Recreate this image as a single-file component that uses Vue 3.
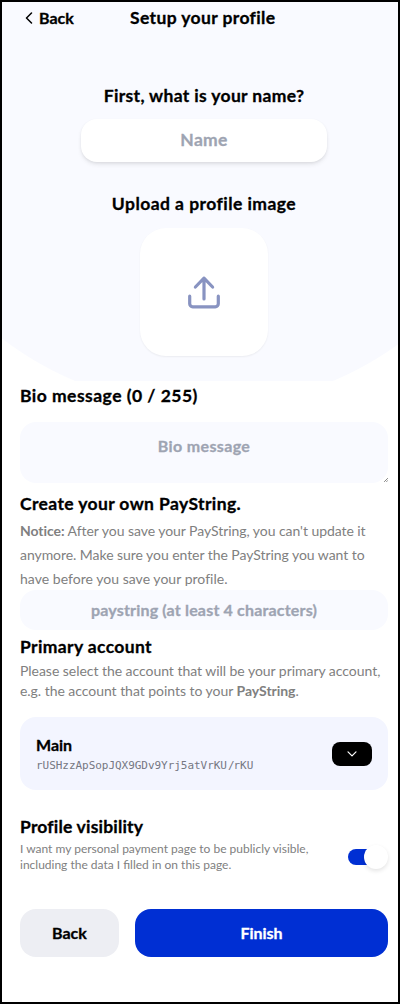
<script setup>
import { ref } from 'vue'

const name = ref('')
const bio = ref('')
const payString = ref('')
</script>

<template>
  <main class="screen">
    <section class="hero">
      <header class="bar">
        <button class="back" type="button">
          <svg width="8" height="12" viewBox="0 0 8 12"><path d="M6.5 1 1.5 6l5 5" /></svg>
          <span>Back</span>
        </button>
        <h1 class="t-title">Setup your profile</h1>
      </header>
      <h2 class="ask">First, what is your name?</h2>
      <input v-model="name" class="name" placeholder="Name">
      <h2 class="upload-title">Upload a profile image</h2>
      <div class="drop">
        <svg width="34" height="34" viewBox="0 0 34 34">
          <path d="M17 24V3.2M8.4 12 17 3.2 25.6 12" />
          <path d="M2.7 21.2v7.6a3 3 0 0 0 3 3h22.6a3 3 0 0 0 3-3v-7.6" />
        </svg>
      </div>
    </section>

    <section class="body">
      <h2 class="t-bio">Bio message ({{ bio.length }} / 255)</h2>
      <div class="bio-wrap">
        <textarea v-model="bio" class="bio" placeholder="Bio message"></textarea>
        <svg class="grip" width="4" height="4" viewBox="0 0 4 4"><path d="M.4 3.6 3.6.4M2.6 3.6l1-1" /></svg>
      </div>
      <h2 class="t-create">Create your own PayString.</h2>
      <p class="notice">
        <span class="n1"><b>Notice:</b> After you save your PayString, you can't update it</span><br>
        <span class="n1">anymore. Make sure you enter the PayString you want to</span><br>
        <span class="n3">have before you save your profile.</span>
      </p>
      <input v-model="payString" class="paystring" placeholder="paystring (at least 4 characters)">
      <h2 class="t-primary">Primary account</h2>
      <p class="hint">
        Please select the account that will be your primary account,<br>
        e.g. the account that points to your <b>PayString</b>.
      </p>
      <div class="account">
        <div class="account-text">
          <div class="account-name">Main</div>
          <div class="address">rUSHzzApSopJQX9GDv9Yrj5atVrKU<i>/</i>rKU</div>
        </div>
        <button class="chevron" type="button">
          <svg width="10" height="6" viewBox="0 0 10 6"><path d="M1 .8 5 4.8 9 .8" /></svg>
        </button>
      </div>
      <h2 class="t-visibility">Profile visibility</h2>
      <div class="visibility">
        <p>
          I want my personal payment page to be publicly visible,<br>
          including the data I filled in on this page.
        </p>
        <div class="toggle"><span></span></div>
      </div>
      <footer class="actions">
        <button class="secondary" type="button">Back</button>
        <button class="primary" type="button">Finish</button>
      </footer>
    </section>
  </main>
</template>

<style>
body {
  margin: 0;
}
</style>

<style scoped>
* {
  box-sizing: border-box;
}
.screen {
  width: 400px;
  height: 1004px;
  border: 2px solid #000;
  background: #fff;
  color: #000;
  font-family: Lato, "Liberation Sans", sans-serif;
  overflow: hidden;
  white-space: nowrap;
}
h1, h2, p {
  margin: 0;
}
h1, h2 {
  font-size: 17.5px;
  line-height: 24px;
  font-weight: 700;
  -webkit-text-stroke: 0.3px #000;
}
button, input, textarea {
  font-family: inherit;
  border: 0;
  padding: 0;
  margin: 0;
  outline: 0;
}
.hero {
  height: 379px;
  display: flex;
  flex-direction: column;
  align-items: center;
  padding-left: 8px;
  background: radial-gradient(circle at 202px 73px, #f9faff 331.6px, #fff 332.4px);
}
.bar {
  align-self: stretch;
  height: 33px;
  display: flex;
  align-items: center;
  padding: 0 0 1px 15px;
}
.back {
  display: flex;
  align-items: center;
  gap: 6px;
  width: 105px;
  background: none;
  color: #000;
  font-size: 16px;
  font-weight: 700;
  -webkit-text-stroke: 0.3px #000;
}
.back span {
  padding-bottom: 1px;
}
.t-title {
  letter-spacing: 0.38px;
  padding-bottom: 1px;
}
svg {
  display: block;
  fill: none;
  stroke-linecap: round;
  stroke-linejoin: round;
}
.back svg {
  stroke: #000;
  stroke-width: 1.5;
}
.ask {
  margin-top: 49px;
  letter-spacing: 0.34px;
}
.name {
  width: 246px;
  height: 43px;
  margin-top: 11px;
  padding-bottom: 2px;
  border-radius: 16px;
  background: #fff;
  text-align: center;
  font-size: 17.5px;
  font-weight: 700;
  letter-spacing: 0.3px;
  box-shadow: 0 3px 5px -1px rgba(0, 0, 0, 0.1), 0 1px 3px rgba(0, 0, 0, 0.05);
}
::placeholder {
  color: #9ea4b2;
  opacity: 1;
  -webkit-text-stroke: 0.3px #9ea4b2;
}
.upload-title {
  margin-top: 30px;
  letter-spacing: 0.45px;
}
.drop {
  width: 128px;
  height: 128px;
  margin-top: 12px;
  border-radius: 26px;
  background: #fff;
  box-shadow: 0 1px 2px rgba(0, 0, 0, 0.06);
  display: grid;
  place-items: center;
}
.drop svg {
  stroke: #8893c1;
  stroke-width: 3.2;
}
.body {
  padding: 3px 10px 0 18px;
}
.t-bio {
  letter-spacing: 0.47px;
}
.bio-wrap {
  position: relative;
  margin-top: 14px;
}
.bio {
  display: block;
  width: 368px;
  height: 61px;
  padding: 14px 20px 0;
  border-radius: 16px;
  background: #f9faff;
  resize: none;
  text-align: center;
  font-size: 16px;
  line-height: 20px;
  font-weight: 700;
  letter-spacing: 0.36px;
}
.grip {
  position: absolute;
  right: 0;
  bottom: 1px;
  stroke: #777;
  stroke-width: 0.9;
}
.t-create {
  margin-top: 9px;
  letter-spacing: 0.38px;
}
.notice {
  margin: 3px 0 -1px;
  color: #808080;
  font-size: 14px;
  line-height: 24px;
}
.n1 {
  letter-spacing: -0.055px;
}
.n3 {
  letter-spacing: 0.03px;
}
.paystring {
  display: block;
  width: 368px;
  height: 40px;
  padding-bottom: 2px;
  border-radius: 16px;
  background: #f9faff;
  text-align: center;
  font-size: 16px;
  font-weight: 700;
  letter-spacing: 0.18px;
}
.t-primary {
  margin-top: 5px;
  letter-spacing: 0.37px;
}
.hint {
  margin-top: 2px;
  color: #808080;
  font-size: 14px;
  line-height: 20px;
  letter-spacing: -0.04px;
}
.account {
  height: 73px;
  margin-top: 16px;
  padding: 0 16px;
  border-radius: 16px;
  background: #f3f5ff;
  display: flex;
  align-items: center;
  justify-content: space-between;
}
.account-text {
  padding-top: 3px;
}
.account-name {
  font-size: 16px;
  line-height: 20px;
  font-weight: 700;
  -webkit-text-stroke: 0.3px #000;
}
.address {
  font-family: "DejaVu Sans Mono", monospace;
  font-size: 11px;
  line-height: 21px;
  color: #757782;
  letter-spacing: -0.04px;
}
.address i {
  font-style: normal;
  position: relative;
  left: 1px;
}
.chevron {
  width: 40px;
  height: 24px;
  border-radius: 8px;
  background: #000;
  display: grid;
  place-items: center;
}
.chevron svg {
  stroke: #fff;
  stroke-width: 1.2;
}
.t-visibility {
  margin-top: 25px;
  letter-spacing: 0.19px;
}
.visibility {
  display: flex;
  justify-content: space-between;
  margin-top: 2px;
}
.visibility p {
  font-size: 12px;
  line-height: 16px;
  color: #808080;
}
.toggle {
  width: 40px;
  height: 16px;
  margin-top: 8px;
  background: linear-gradient(90deg, #002fd3 32px, transparent 32px);
  border-radius: 8px;
  display: flex;
  align-items: center;
  justify-content: flex-end;
}
.toggle span {
  width: 24px;
  height: 24px;
  flex: none;
  border-radius: 50%;
  background: #fff;
  box-shadow: 0 2px 4px rgba(0, 0, 0, 0.11);
}
.actions {
  margin-top: 36px;
  display: flex;
  gap: 16px;
}
.actions button {
  height: 48px;
  padding-bottom: 2px;
  border-radius: 16px;
  font-size: 16px;
  font-weight: 700;
  -webkit-text-stroke: 0.3px currentColor;
}
.secondary {
  width: 99px;
  background: #edeef3;
  color: #000;
}
.primary {
  flex: 1;
  background: #002fd3;
  color: #fff;
}
</style>
